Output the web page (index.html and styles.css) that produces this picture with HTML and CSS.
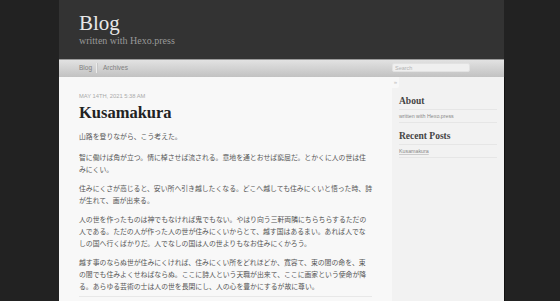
FILE: index.html
```html
<!DOCTYPE html>
<html lang="ja">
<head>
<meta charset="utf-8">
<title>Kusamakura | Blog</title>
<link rel="stylesheet" href="styles.css">
</head>
<body>
<div class="wrap">
  <header class="site-header">
    <h1 class="site-title">Blog</h1>
    <p class="site-sub">written with Hexo.press</p>
  </header>
  <nav class="nav">
    <ul class="nav-links">
      <li><a href="#">Blog</a></li>
      <li><a href="#">Archives</a></li>
    </ul>
    <div class="nav-search">
      <input class="search" type="text" placeholder="Search">
    </div>
  </nav>
  <div class="body">
    <main class="main">
      <article class="post">
        <time class="post-date">May 14th, 2021 5:38 am</time>
        <h2 class="post-title">Kusamakura</h2>
        <div class="post-content">
          <p>山路を登りながら、こう考えた。</p>
          <p>智に働けば角が立つ。情に棹させば流される。意地を通とおせば窮屈だ。とかくに人の世は住みにくい。</p>
          <p>住みにくさが高じると、安い所へ引き越したくなる。どこへ越しても住みにくいと悟った時、詩が生れて、画が出来る。</p>
          <p>人の世を作ったものは神でもなければ鬼でもない。やはり向う三軒両隣にちらちらするただの人である。ただの人が作った人の世が住みにくいからとて、越す国はあるまい。あれば人でなしの国へ行くばかりだ。人でなしの国は人の世よりもなお住みにくかろう。</p>
          <p>越す事のならぬ世が住みにくければ、住みにくい所をどれほどか、寛容て、束の間の命を、束の間でも住みよくせねばならぬ。ここに詩人という天職が出来て、ここに画家という使命が降る。あらゆる芸術の士は人の世を長閑にし、人の心を豊かにするが故に尊い。</p>
        </div>
      </article>
    </main>
    <aside class="sidebar">
      <span class="toggle">»</span>
      <section class="widget">
        <h3 class="widget-title">About</h3>
        <p class="widget-text">written with Hexo.press</p>
      </section>
      <section class="widget">
        <h3 class="widget-title">Recent Posts</h3>
        <p class="widget-text"><a href="#">Kusamakura</a></p>
      </section>
    </aside>
  </div>
</div>
</body>
</html>
```
FILE: styles.css
```css
html, body {
  margin: 0;
  padding: 0;
}
body {
  background: #222;
  font-family: "Liberation Sans", Arial, sans-serif;
}
.wrap {
  width: 445px;
  margin-left: 59px;
}
.site-header {
  background: #333;
  height: 59px;
  padding: 12px 0 0 20px;
  box-sizing: border-box;
}
.site-title {
  margin: 0;
  font-family: "Liberation Serif", serif;
  font-weight: normal;
  font-size: 21px;
  line-height: 22px;
  color: #e8e8e8;
}
.site-sub {
  margin: 1px 0 0;
  font-family: "Liberation Serif", serif;
  font-size: 10px;
  line-height: 12px;
  color: #999;
}
.nav {
  display: grid;
  grid-template-columns: 333px 112px;
  height: 18px;
  background: linear-gradient(#e4e4e4, #c2c2c2);
  box-shadow: inset 0 1px 0 #9a9a9a;
}
.nav-links {
  list-style: none;
  margin: 0;
  padding: 0 0 0 20px;
  display: flex;
  align-items: center;
}
.nav-links li + li {
  border-left: 1px solid #c8c8c8;
  box-shadow: -1px 0 0 #ececec;
}
.nav-links a {
  display: block;
  padding: 0 5px;
  font-size: 6.5px;
  line-height: 10px;
  color: #808080;
  text-decoration: none;
}
.nav-links li:first-child a {
  padding-left: 0;
}
.nav-search {
  display: flex;
  align-items: flex-start;
  padding-top: 4px;
}
.search {
  width: 78px;
  height: 9px;
  box-sizing: border-box;
  margin: 0;
  padding: 0 2px;
  border: 1px solid #e2e2e2;
  border-radius: 2px;
  background: #efefef;
  font-family: "Liberation Sans", Arial, sans-serif;
  font-size: 5.5px;
  color: #888;
  outline: none;
}
.search::placeholder {
  color: #b4b4b4;
}
.body {
  display: flex;
}
.main {
  width: 333px;
  box-sizing: border-box;
  padding: 15px 20px 20px;
  background: #f8f8f8;
}
.post-date {
  display: block;
  font-size: 5.75px;
  line-height: 8px;
  color: #aaa;
  text-transform: uppercase;
}
.post-title {
  margin: 3px 0 0;
  font-family: "Liberation Serif", serif;
  font-weight: bold;
  font-size: 16.5px;
  line-height: 20px;
  color: #222;
}
.post-content {
  margin-top: 7px;
  padding-bottom: 4px;
  border-bottom: 1px solid #e8e8e8;
  font-family: "Noto Sans CJK JP", sans-serif;
  font-size: 6.85px;
  line-height: 12px;
  color: #555;
  text-spacing-trim: space-all;
}
.post-content p {
  margin: 0 0 7px;
}
.post-content p:first-child {
  margin-bottom: 9px;
}
.post-content p:last-child {
  margin-bottom: 0;
}
.sidebar {
  position: relative;
  width: 112px;
  box-sizing: border-box;
  padding: 19px 7px 0;
  background: #f2f2f2;
  box-shadow: 1px 0 0 #111;
}
.toggle {
  position: absolute;
  left: 0;
  top: 0;
  width: 7px;
  height: 11px;
  background: #f8f8f8;
  border-radius: 0 0 2px 0;
  font-size: 6px;
  line-height: 10px;
  text-align: center;
  color: #bbb;
}
.widget {
  margin-bottom: 8px;
}
.widget-title {
  margin: 0;
  padding-bottom: 2px;
  border-bottom: 1px solid #e6e6e6;
  font-family: "Liberation Serif", serif;
  font-weight: bold;
  font-size: 9.5px;
  line-height: 11px;
  color: #444;
}
.widget-text {
  margin: 0;
  padding: 3px 0 2px;
  border-bottom: 1px solid #e6e6e6;
  font-size: 5.3px;
  line-height: 7px;
  color: #888;
}
.widget-text a {
  color: #888;
  text-decoration: underline;
  text-decoration-color: #ccc;
}
```
